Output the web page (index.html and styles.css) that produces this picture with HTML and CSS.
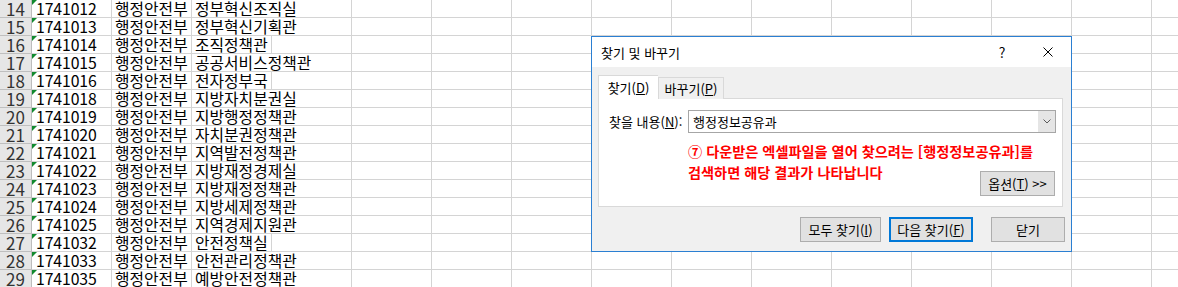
FILE: index.html
```html
<!DOCTYPE html>
<html lang="ko">
<head>
    <meta charset="UTF-8">
    <title>찾기 및 바꾸기</title>
    <link rel="stylesheet" href="styles.css">
</head>
<body>
    <div class="sheet">
        <div class="row"><div class="num">14</div><div class="cell code">1741012</div><div class="cell">행정안전부</div><div class="cell spill">정부혁신조직실</div><div class="rest"></div></div>
        <div class="row"><div class="num">15</div><div class="cell code">1741013</div><div class="cell">행정안전부</div><div class="cell spill">정부혁신기획관</div><div class="rest"></div></div>
        <div class="row"><div class="num">16</div><div class="cell code">1741014</div><div class="cell">행정안전부</div><div class="cell">조직정책관</div><div class="rest"></div></div>
        <div class="row"><div class="num">17</div><div class="cell code">1741015</div><div class="cell">행정안전부</div><div class="cell spill">공공서비스정책관</div><div class="rest"></div></div>
        <div class="row"><div class="num">18</div><div class="cell code">1741016</div><div class="cell">행정안전부</div><div class="cell">전자정부국</div><div class="rest"></div></div>
        <div class="row"><div class="num">19</div><div class="cell code">1741018</div><div class="cell">행정안전부</div><div class="cell spill">지방자치분권실</div><div class="rest"></div></div>
        <div class="row"><div class="num">20</div><div class="cell code">1741019</div><div class="cell">행정안전부</div><div class="cell spill">지방행정정책관</div><div class="rest"></div></div>
        <div class="row"><div class="num">21</div><div class="cell code">1741020</div><div class="cell">행정안전부</div><div class="cell spill">자치분권정책관</div><div class="rest"></div></div>
        <div class="row"><div class="num">22</div><div class="cell code">1741021</div><div class="cell">행정안전부</div><div class="cell spill">지역발전정책관</div><div class="rest"></div></div>
        <div class="row"><div class="num">23</div><div class="cell code">1741022</div><div class="cell">행정안전부</div><div class="cell spill">지방재정경제실</div><div class="rest"></div></div>
        <div class="row"><div class="num">24</div><div class="cell code">1741023</div><div class="cell">행정안전부</div><div class="cell spill">지방재정정책관</div><div class="rest"></div></div>
        <div class="row"><div class="num">25</div><div class="cell code">1741024</div><div class="cell">행정안전부</div><div class="cell spill">지방세제정책관</div><div class="rest"></div></div>
        <div class="row"><div class="num">26</div><div class="cell code">1741025</div><div class="cell">행정안전부</div><div class="cell spill">지역경제지원관</div><div class="rest"></div></div>
        <div class="row"><div class="num">27</div><div class="cell code">1741032</div><div class="cell">행정안전부</div><div class="cell">안전정책실</div><div class="rest"></div></div>
        <div class="row"><div class="num">28</div><div class="cell code">1741033</div><div class="cell">행정안전부</div><div class="cell spill">안전관리정책관</div><div class="rest"></div></div>
        <div class="row"><div class="num">29</div><div class="cell code">1741035</div><div class="cell">행정안전부</div><div class="cell spill">예방안전정책관</div><div class="rest"></div></div>
    </div>

    <div class="dialog">
        <div class="titlebar">
            <span class="title">찾기 및 바꾸기</span>
            <span class="caption-btn">?</span>
            <span class="caption-btn">
                <svg width="10" height="10" viewBox="0 0 10 10"><path d="M0.5 0.5L9.5 9.5M9.5 0.5L0.5 9.5" stroke="#000" stroke-width="1" fill="none"/></svg>
            </span>
        </div>
        <div class="dlg-body">
            <div class="tabs">
                <div class="tab active">찾기(<u>D</u>)</div>
                <div class="tab">바꾸기(<u>P</u>)</div>
            </div>
            <div class="panel">
                <label class="field-label">찾을 내용(<u>N</u>):</label>
                <div class="combo">
                    <span class="combo-text">행정정보공유과</span>
                    <span class="combo-drop">
                        <svg width="8" height="5" viewBox="0 0 8 5"><path d="M0.5 0.5L4 4L7.5 0.5" stroke="#5a5a5a" stroke-width="1" fill="none"/></svg>
                    </span>
                </div>
                <div class="note">⑦ 다운받은 엑셀파일을 열어 찾으려는 [행정정보공유과]를<br>검색하면 해당 결과가 나타납니다</div>
                <button class="btn options">옵션(<u>T</u>) &gt;&gt;</button>
            </div>
            <div class="actions">
                <button class="btn find-all">모두 찾기(<u>I</u>)</button>
                <button class="btn find-next">다음 찾기(<u>F</u>)</button>
                <button class="btn close">닫기</button>
            </div>
        </div>
    </div>
</body>
</html>
```

FILE: styles.css
```css
body {
    margin: 0;
    overflow: hidden;
    background: #ffffff;
    font-family: "Noto Sans CJK KR", "Noto Sans", sans-serif;
    color: #000000;
}

/* Hoja de cálculo */
.sheet {
    width: 1178px;
}

.row {
    display: flex;
    height: 18px;
    box-sizing: border-box;
    border-bottom: 1px solid #d4d4d4;
    font-size: 15.8px;
    line-height: 17px;
}

.num {
    width: 32px;
    flex: none;
    box-sizing: border-box;
    background: #e6e6e6;
    border-right: 1px solid #bdbdbd;
    box-shadow: 0 1px 0 #bfbfbf;
    text-align: center;
    color: #333333;
    font-size: 17px;
}

.cell {
    width: 80px;
    flex: none;
    box-sizing: border-box;
    padding-left: 3px;
    border-right: 1px solid #d4d4d4;
    white-space: nowrap;
    position: relative;
}

.cell.code {
    padding-left: 4px;
    letter-spacing: -0.1px;
}

/* triángulo verde: número guardado como texto */
.cell.code::before {
    content: "";
    position: absolute;
    top: 0;
    left: 0;
    border-top: 5px solid #128a2e;
    border-right: 5px solid transparent;
}

.cell.spill {
    border-right-color: transparent;
    z-index: 1;
}

.rest {
    flex: 1;
    background: repeating-linear-gradient(to right, transparent 0 79px, #d4d4d4 79px 80px);
}

/* Diálogo */
.dialog {
    position: absolute;
    left: 591px;
    top: 36px;
    width: 481px;
    height: 216px;
    box-sizing: border-box;
    border: 1px solid #2b7fd2;
    background: #f0f0f0;
    font-size: 13px;
    display: flex;
    flex-direction: column;
}

.titlebar {
    height: 30px;
    background: #ffffff;
    display: flex;
    align-items: center;
}

.title {
    flex: 1;
    padding-left: 9px;
}

.caption-btn {
    width: 46px;
    height: 30px;
    display: flex;
    align-items: center;
    justify-content: center;
    font-size: 14px;
}

.dlg-body {
    flex: 1;
    padding: 8px 8px 0 6px;
}

.tabs {
    display: flex;
    align-items: flex-end;
    height: 24px;
    margin-bottom: -1px;
    position: relative;
    z-index: 1;
}

.tab {
    height: 22px;
    box-sizing: border-box;
    padding: 0;
    border: 1px solid #d9d9d9;
    border-bottom: none;
    line-height: 21px;
    background: #f0f0f0;
    text-align: center;
    white-space: nowrap;
}

.tab.active {
    height: 24px;
    width: 60px;
    background: #ffffff;
    border-right: none;
    line-height: 24px;
}

.tab:not(.active) {
    width: 66px;
}

.panel {
    height: 109px;
    box-sizing: border-box;
    background: #ffffff;
    border: 1px solid #d9d9d9;
    padding: 11px 6px 0 10px;
    display: grid;
    grid-template-columns: 79px 1fr;
    grid-template-rows: 23px auto;
    align-items: start;
}

.field-label {
    line-height: 23px;
    white-space: nowrap;
}

.combo {
    display: flex;
    height: 23px;
    box-sizing: border-box;
    border: 1px solid #a6a6a6;
}

.combo-text {
    flex: 1;
    padding-left: 4px;
    line-height: 21px;
}

.combo-drop {
    width: 17px;
    background: #e5e5e5;
    display: flex;
    align-items: center;
    justify-content: center;
}

.note {
    grid-column: 2;
    grid-row: 2;
    margin-top: 8px;
    color: #ff0000;
    font-weight: bold;
    font-size: 14.2px;
    line-height: 21px;
    white-space: nowrap;
}

.btn {
    font-family: inherit;
    font-size: 13px;
    height: 25px;
    padding: 0;
    background: #e1e1e1;
    border: 1px solid #adadad;
    color: #000000;
    white-space: nowrap;
}

.options {
    grid-column: 2;
    grid-row: 2;
    justify-self: end;
    margin-top: 38px;
    margin-right: 1px;
    width: 75px;
}

.actions {
    display: flex;
    justify-content: flex-end;
    margin-top: 10px;
    margin-right: -2px;
}

.find-all {
    width: 81px;
}

.find-next {
    width: 84px;
    margin-left: 8px;
    border: 2px solid #0078d7;
}

.close {
    width: 74px;
    margin-left: 18px;
}
```
